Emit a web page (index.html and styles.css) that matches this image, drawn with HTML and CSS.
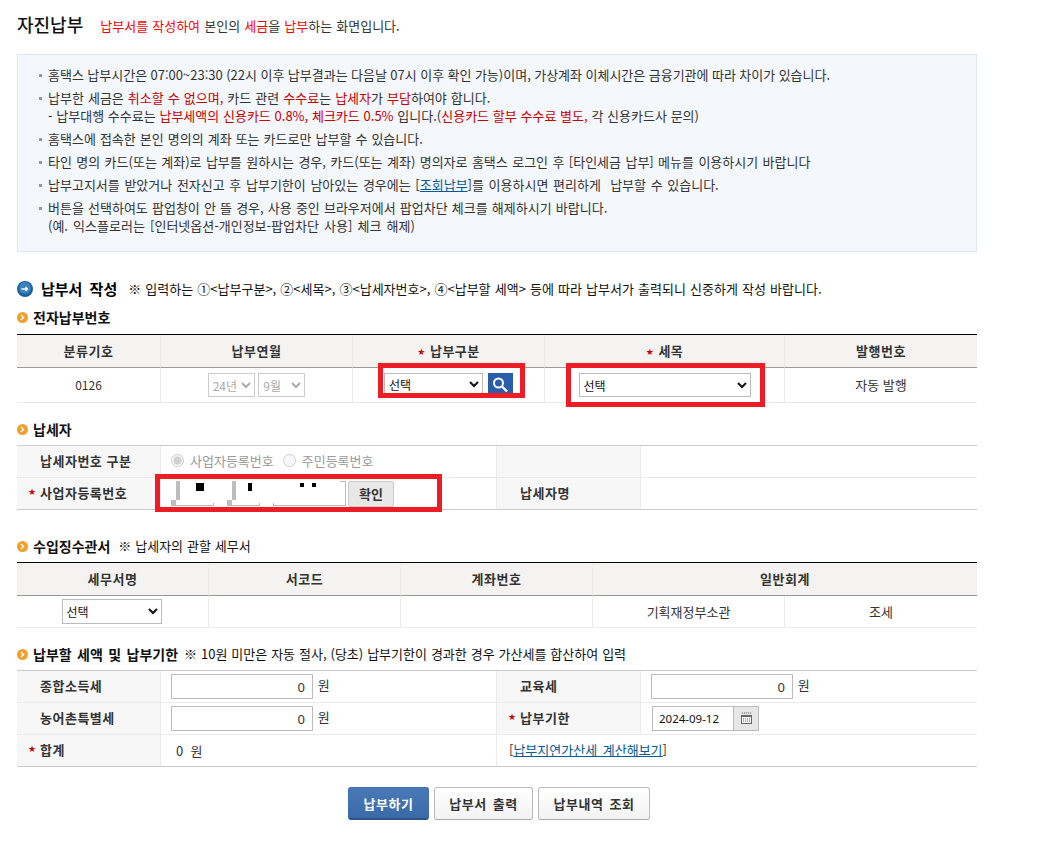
FILE: index.html
```html
<!DOCTYPE html>
<html lang="ko">
<head>
<meta charset="utf-8">
<title>자진납부</title>
<link rel="stylesheet" href="styles.css">
</head>
<body>
<div class="page">
  <header class="title-row">
    <h1>자진납부</h1>
    <p><span class="red">납부서를 작성하여</span> 본인의 <span class="red">세금</span>을 <span class="red">납부</span>하는 화면입니다.</p>
  </header>

  <ul class="info">
    <li class="ws0">홈택스 납부시간은 07:00~23:30 (22시 이후 납부결과는 다음날 07시 이후 확인 가능)이며, 가상계좌 이체시간은 금융기관에 따라 차이가 있습니다.</li>
    <li class="ws4">납부한 세금은 <span class="dred">취소할 수 없으며,</span> 카드 관련 <span class="dred">수수료</span>는 <span class="dred">납세자</span>가 <span class="dred">부담</span>하여야 합니다.<br><span class="ws1">- 납부대행 수수료는 <span class="dred">납부세액의 신용카드 0.8%, 체크카드 0.5%</span> 입니다.(<span class="dred">신용카드 할부 수수료 별도,</span> 각 신용카드사 문의)</span></li>
    <li class="ws4">홈택스에 접속한 본인 명의의 계좌 또는 카드로만 납부할 수 있습니다.</li>
    <li class="ws8">타인 명의 카드(또는 계좌)로 납부를 원하시는 경우, 카드(또는 계좌) 명의자로 홈택스 로그인 후 [타인세금 납부] 메뉴를 이용하시기 바랍니다</li>
    <li class="ws10">납부고지서를 받았거나 전자신고 후 납부기한이 남아있는 경우에는 [<a href="#">조회납부</a>]를 이용하시면 편리하게 &nbsp;납부할 수 있습니다.</li>
    <li class="ws5">버튼을 선택하여도 팝업창이 안 뜰 경우, 사용 중인 브라우저에서 팝업차단 체크를 해제하시기 바랍니다.<br><span class="ws15">(예. 익스플로러는 [인터넷옵션-개인정보-팝업차단 사용] 체크 해제)</span></li>
  </ul>

  <div class="main-head">
    <svg class="ico-main" viewBox="0 0 16 16"><circle cx="8" cy="8" r="8" fill="#1f5f9e"/><circle cx="8" cy="7" r="6" fill="#3b82c0"/><path d="M4.5 8h6M8.5 6l2 2-2 2" fill="none" stroke="#fff" stroke-width="1.3"/></svg>
    <strong>납부서 작성</strong>
    <span class="note">※ 입력하는 ①&lt;납부구분&gt;, ②&lt;세목&gt;, ③&lt;납세자번호&gt;, ④&lt;납부할 세액&gt; 등에 따라 납부서가 출력되니 신중하게 작성 바랍니다.</span>
  </div>

  <h2 class="sec sec-first"><svg class="ico-sec" viewBox="0 0 11 11"><circle cx="5.5" cy="5.5" r="5.5" fill="#f0a02c"/><path d="M4 3l2.5 2.5L4 8" fill="none" stroke="#fff" stroke-width="1.4"/></svg>전자납부번호</h2>
  <table class="grid grid-head t1">
    <colgroup><col class="w144"><col class="w192"><col class="w192"><col class="w240"><col></colgroup>
    <tr class="hr33"><th>분류기호</th><th>납부연월</th><th><span class="star">★</span> 납부구분</th><th><span class="star">★</span> 세목</th><th>발행번호</th></tr>
    <tr class="r35">
      <td class="code">0126</td>
      <td><select class="sel sel-y" disabled><option>24년</option></select> <select class="sel sel-m" disabled><option>9월</option></select></td>
      <td><div class="sel-group"><select class="sel sel-gubun"><option>선택</option></select><button class="search" type="button" aria-label="검색"><svg viewBox="0 0 25 24" width="25" height="24"><circle cx="10.5" cy="10" r="4.5" fill="none" stroke="#fff" stroke-width="2"/><path d="M14 13.5l5 5" stroke="#fff" stroke-width="2.4"/></svg></button></div></td>
      <td><select class="sel sel-semok"><option>선택</option></select></td>
      <td>자동 발행</td>
    </tr>
  </table>

  <h2 class="sec"><svg class="ico-sec" viewBox="0 0 11 11"><circle cx="5.5" cy="5.5" r="5.5" fill="#f0a02c"/><path d="M4 3l2.5 2.5L4 8" fill="none" stroke="#fff" stroke-width="1.4"/></svg>납세자</h2>
  <table class="grid grid-form">
    <colgroup><col class="w144"><col class="w336"><col class="w144"><col></colgroup>
    <tr class="r32"><th>납세자번호 구분</th><td class="left"><label class="radio"><input type="radio" name="k" checked disabled>사업자등록번호</label><label class="radio"><input type="radio" name="k" disabled>주민등록번호</label></td><th></th><td></td></tr>
    <tr class="r32"><th><span class="star star-abs">★</span>사업자등록번호</th><td class="left"><div class="biz">
      <svg class="mask" width="175" height="26" viewBox="0 0 175 26"><g fill="#bdbdbd"><rect x="5" y="0" width="4" height="19"/><rect x="0" y="19" width="5" height="5"/><rect x="0" y="24" width="43" height="1"/><rect x="42" y="22" width="1" height="3"/><rect x="61" y="0" width="4" height="19"/><rect x="56" y="19" width="5" height="5"/><rect x="56" y="24" width="33" height="1"/><rect x="88" y="22" width="1" height="3"/><rect x="102" y="22" width="1" height="3"/><rect x="102" y="24" width="72" height="1"/><rect x="174" y="0" width="1" height="25"/><rect x="169" y="0" width="5" height="1"/></g><g fill="#000"><rect x="25" y="2" width="8" height="8"/><rect x="77" y="2" width="4" height="8"/><rect x="129" y="2" width="4" height="4"/><rect x="141" y="2" width="4" height="4"/></g></svg>
      <button class="confirm" type="button">확인</button></div></td><th>납세자명</th><td></td></tr>
  </table>

  <h2 class="sec sec-wide"><svg class="ico-sec" viewBox="0 0 11 11"><circle cx="5.5" cy="5.5" r="5.5" fill="#f0a02c"/><path d="M4 3l2.5 2.5L4 8" fill="none" stroke="#fff" stroke-width="1.4"/></svg>수입징수관서<span class="note">※ 납세자의 관할 세무서</span></h2>
  <table class="grid grid-head t3">
    <colgroup><col class="w192"><col class="w192"><col class="w192"><col class="w192"><col></colgroup>
    <tr class="hr33"><th>세무서명</th><th>서코드</th><th>계좌번호</th><th colspan="2">일반회계</th></tr>
    <tr class="r32"><td><select class="sel sel-office"><option>선택</option></select></td><td></td><td></td><td>기획재정부소관</td><td>조세</td></tr>
  </table>

  <h2 class="sec sec-spaced"><svg class="ico-sec" viewBox="0 0 11 11"><circle cx="5.5" cy="5.5" r="5.5" fill="#f0a02c"/><path d="M4 3l2.5 2.5L4 8" fill="none" stroke="#fff" stroke-width="1.4"/></svg>납부할 세액 및 납부기한<span class="note">※ 10원 미만은 자동 절사, (당초) 납부기한이 경과한 경우 가산세를 합산하여 입력</span></h2>
  <table class="grid grid-form">
    <colgroup><col class="w144"><col class="w336"><col class="w144"><col></colgroup>
    <tr class="r32"><th>종합소득세</th><td class="left"><input class="num" type="text" value="0"> <span class="won">원</span></td><th>교육세</th><td class="left"><input class="num" type="text" value="0"> <span class="won">원</span></td></tr>
    <tr class="r32"><th>농어촌특별세</th><td class="left"><input class="num" type="text" value="0"> <span class="won">원</span></td><th><span class="star star-abs">★</span>납부기한</th><td class="left"><div class="date"><input class="date-in" type="text" value="2024-09-12"><button class="cal" type="button" aria-label="달력"><svg viewBox="0 0 13 13" width="13" height="13"><path d="M2 1h9" stroke="#555" stroke-dasharray="1 1"/><rect x="1.5" y="3.5" width="10" height="8" fill="#fff" stroke="#666"/><path d="M1 3h11v2H1z" fill="#666"/><path d="M3 7h7M3 9h7" stroke="#666" stroke-dasharray="1 1"/></svg></button></div></td></tr>
    <tr class="r32"><th><span class="star star-abs">★</span>합계</th><td class="left total">0 &nbsp;원</td><th class="plain" colspan="2">[<a href="#">납부지연가산세 계산해보기</a>]</th></tr>
  </table>

  <div class="actions">
    <button class="btn btn-primary" type="button">납부하기</button>
    <button class="btn b99" type="button">납부서 출력</button>
    <button class="btn b112" type="button">납부내역 조회</button>
  </div>

  <div class="mark m1"></div>
  <div class="mark m2"></div>
  <div class="mark m3"></div>
</div>
</body>
</html>
```

FILE: styles.css
```css
* { box-sizing: border-box; }
html, body { margin: 0; padding: 0; background: #fff; }
body { font-family: "Noto Sans CJK KR", "Noto Sans", sans-serif; font-size: 13px; color: #333; line-height: 18px; }
.page { position: relative; width: 994px; height: 847px; padding: 0 17px; overflow: hidden; }
a { color: #005a96; text-decoration: underline; }
.red { color: #f00; }
.dred { color: #c80000; }

.title-row { display: flex; align-items: center; height: 54px; padding-bottom: 4px; }
.title-row h1 { margin: 0 17px 3px 0; font-size: 18px; font-weight: 500; color: #111; line-height: 24px; }
.title-row p { margin: 2px 0 0; color: #333; word-spacing: .5px; }

.info { margin: 0; height: 198px; padding: 11px 0 0 19px; list-style: none; background: #f4f7fc; border: 1px solid #e0e6ee; }
.info li { position: relative; padding-left: 11px; margin-bottom: 5px; }
.info li::before { content: ""; position: absolute; left: 2px; top: 8px; width: 3px; height: 3px; background: #999; }
.ws0 { word-spacing: -.2px; } .ws1 { word-spacing: .1px; } .ws4 { word-spacing: .4px; } .ws5 { word-spacing: .5px; } .ws8 { word-spacing: .75px; } .ws10 { word-spacing: 1px; } .ws15 { word-spacing: 1.5px; }

.main-head { display: flex; align-items: center; height: 18px; margin-top: 28px; color: #000; white-space: nowrap; }
.ico-main { width: 16px; height: 16px; margin-right: 8px; }
.main-head strong { font-size: 15px; font-weight: 700; margin-right: 11px; word-spacing: 3px; }
.main-head .note { word-spacing: .5px; }
.note { font-weight: 400; font-size: 13px; color: #111; word-spacing: .3px; }

.sec { display: flex; align-items: center; margin: 17px 0 7px; height: 18px; font-size: 14px; font-weight: 700; color: #111; white-space: nowrap; }
.sec-first { margin: 10px 0 8px; }
.sec-wide { margin-top: 27px; }
.sec-spaced { word-spacing: 1.5px; }
.sec .note { margin-left: 8px; }
.sec-spaced .note { margin-left: 6px; }
.ico-sec { width: 11px; height: 11px; margin-right: 5px; flex: none; }

.grid { width: 960px; table-layout: fixed; border-collapse: separate; border-spacing: 0; }
.w144 { width: 144px; } .w192 { width: 192px; } .w240 { width: 240px; } .w336 { width: 336px; }
.grid th, .grid td { padding: 0; text-align: center; border-bottom: 1px solid #ebebeb; border-right: 1px solid #ebebeb; }
.grid th:last-child, .grid td:last-child { border-right: 0; }
.grid th { font-weight: 700; letter-spacing: .5px; color: #333; }
.hr33 { height: 33px; } .r35 { height: 35px; } .r32 { height: 32px; }
.grid-head { border-top: 1px solid #000; }
.grid-head th { background: #f4f3f1; border-bottom-color: #999; }
.grid-form { border-top: 1px solid #ccc; }
.grid-form th { position: relative; background: #f7f7f7; text-align: left; padding: 0 0 2px 23px; }
.grid-form tr:last-child th, .grid-form tr:last-child td { border-bottom-color: #ccc; }
.grid .left { text-align: left; padding-left: 10px; }
.grid .plain { background: #fff; font-weight: 400; text-align: left; padding: 0 0 2px 12px; letter-spacing: 0; word-spacing: 2px; }
.grid .code { font-size: 12px; }

.star { color: #c00; font-family: "DejaVu Sans", sans-serif; font-size: 9px; vertical-align: 1px; }
.star-abs { position: absolute; left: 11px; top: 5px; }

.sel { height: 24px; font: 12px "Noto Sans CJK KR", sans-serif; color: #111; background: #fff; border: 1px solid #bbb; border-radius: 0; vertical-align: middle; padding: 0; }
.sel:disabled { color: #aaa; border-color: #ccc; opacity: 1; }
.sel-y { width: 47px; } .sel-m { width: 47px; }
.sel-gubun { width: 99px; height: 23px; }
.sel-semok { width: 172px; }
.sel-office { width: 100px; height: 25px; margin-right: 2px; }
.sel-group { display: flex; align-items: flex-start; gap: 5px; padding-left: 31px; }
.search { width: 25px; height: 24px; padding: 0; border: 0; background: #2a5daa; }
.search svg { display: block; }

.radio { display: inline-flex; align-items: center; margin-right: 9px; color: #999; }
.radio input { width: 13px; height: 13px; margin: 0 6px 0 0; }

.biz { display: flex; align-items: flex-start; height: 26px; }
.mask { display: block; }
.confirm { width: 46px; height: 26px; margin-left: 2px; padding: 0; font: 700 13px "Noto Sans CJK KR", sans-serif; color: #333; background: #e8e8e8; border: 1px solid #ccc; border-radius: 2px; }

.num { width: 142px; height: 25px; padding: 0 7px; text-align: right; font: 13px "Noto Sans", sans-serif; color: #333; border: 1px solid #bbb; vertical-align: middle; }
.won { margin-left: 1px; }
.total { padding-left: 15px !important; }
.date { display: flex; padding-left: 1px; }
.date-in { width: 82px; height: 25px; padding: 0 6px; font: 11.5px "Noto Sans", sans-serif; color: #111; border: 1px solid #bbb; }
.cal { width: 25px; height: 25px; padding: 0; display: flex; align-items: center; justify-content: center; background: #e6e6e6; border: 1px solid #bbb; border-left: 0; }

.actions { display: flex; justify-content: center; gap: 5px; margin-top: 20px; padding-left: 4px; }
.btn { height: 33px; padding: 0; font: 700 13px "Noto Sans CJK KR", sans-serif; letter-spacing: .5px; color: #333; background: linear-gradient(#fff, #f3f3f3); border: 1px solid #bbb; border-bottom-color: #aaa; border-radius: 3px; word-spacing: 2px; }
.btn-primary { width: 81px; color: #fff; background: linear-gradient(#4a78b8, #3b6aa8); border-color: #3f6eac; border-bottom: 2px solid #2c5488; }
.b99 { width: 99px; } .b112 { width: 112px; }

.mark { position: absolute; border: 5px solid #ee1c25; pointer-events: none; }
.m1 { left: 378px; top: 363px; width: 147px; height: 35px; }
.m2 { left: 566px; top: 363px; width: 199px; height: 44px; }
.m3 { left: 155px; top: 474px; width: 287px; height: 38px; }
```
